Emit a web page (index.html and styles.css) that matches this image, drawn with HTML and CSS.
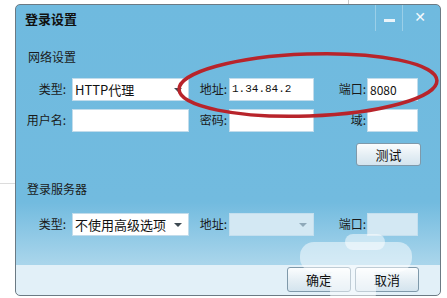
FILE: index.html
```html
<!DOCTYPE html>
<html lang="zh-CN">
<head>
    <meta charset="UTF-8">
    <title>登录设置</title>
    <link rel="stylesheet" href="styles.css">
</head>
<body>
    <div class="edge-v"></div>
    <div class="edge-h"></div>

    <div class="window">
        <div class="titlebar">
            <span class="title">登录设置</span>
            <div class="title-btns">
                <span class="tbtn tbtn-min"><i></i></span>
                <span class="tbtn tbtn-close">✕</span>
            </div>
        </div>

        <div class="section-label first">网络设置</div>
        <div class="form-grid">
            <label>类型:</label>
            <div class="combo"><span>HTTP代理</span><b class="arrow"></b></div>
            <label>地址:</label>
            <div class="field mono">1.34.84.2</div>
            <label>端口:</label>
            <div class="field">8080</div>

            <label>用户名:</label>
            <div class="field"></div>
            <label>密码:</label>
            <div class="field"></div>
            <label>域:</label>
            <div class="field"></div>
        </div>
        <div class="test-row">
            <button class="btn">测试</button>
        </div>

        <div class="section-label second">登录服务器</div>
        <div class="form-grid single">
            <label>类型:</label>
            <div class="combo"><span>不使用高级选项</span><b class="arrow"></b></div>
            <label>地址:</label>
            <div class="combo disabled"><span></span><b class="arrow"></b></div>
            <label>端口:</label>
            <div class="field disabled"></div>
        </div>

        <div class="footer">
            <button class="btn">确定</button>
            <button class="btn">取消</button>
        </div>
    </div>

    <div class="watermark">
        <span class="wm wm1"></span>
        <span class="wm wm2"></span>
        <span class="wm wm3"></span>
    </div>

    <svg class="circle-mark" width="447" height="298" viewBox="0 0 447 298">
        <ellipse cx="308" cy="85" rx="129" ry="31" transform="rotate(-2 308 85)"
                 fill="none" stroke="#b8242b" stroke-width="3.5"/>
    </svg>
</body>
</html>
```

FILE: styles.css
```css
body {
    margin: 0;
    width: 447px;
    height: 298px;
    background: #fff;
    position: relative;
    overflow: hidden;
    font-family: "Noto Sans CJK SC", "DejaVu Sans", sans-serif;
    font-size: 12px;
    color: #1a1a1a;
}
.edge-v {
    position: absolute;
    left: 348px;
    top: 0;
    width: 1px;
    height: 5px;
    background: #c8c8c8;
}
.edge-h {
    position: absolute;
    left: 0;
    top: 183px;
    width: 15px;
    height: 1px;
    background: #dcdcdc;
}
.window {
    position: absolute;
    left: 15px;
    top: 4px;
    width: 424px;
    height: 290px;
    border: 1px solid #6b7a84;
    border-radius: 5px;
    background: linear-gradient(#6fbadf 0%, #72bbdf 68%, #a9d5eb 89%, #a9d5eb 89.5%, #e2f0f8 89.6%, #e2f0f8 100%);
    display: flex;
    flex-direction: column;
    overflow: hidden;
}
.titlebar {
    height: 26px;
    display: flex;
    align-items: flex-start;
    justify-content: space-between;
}
.title {
    font-weight: bold;
    font-size: 13px;
    line-height: 16px;
    margin: 6px 0 0 9px;
    color: #111;
}
.title-btns {
    display: flex;
    height: 26px;
    margin-right: 3px;
}
.tbtn {
    width: 26px;
    height: 26px;
    border-left: 1px solid rgba(255, 255, 255, 0.3);
    display: flex;
    align-items: center;
    justify-content: center;
    color: #f4f9fc;
}
.tbtn-min i {
    display: block;
    width: 11px;
    height: 3px;
    margin-top: 4px;
    background: #eaf4fa;
}
.tbtn-close {
    width: 34px;
    font-size: 14px;
    font-weight: bold;
    margin-top: -4px;
    height: 30px;
}
.section-label {
    font-size: 12px;
    line-height: 16px;
    margin-left: 12px;
}
.section-label.first {
    margin-top: 18px;
}
.section-label.second {
    margin-top: 15px;
    margin-left: 11px;
}
.form-grid {
    display: grid;
    grid-template-columns: 52px 117px 40px 85px 53px 51px;
    grid-auto-rows: 23px;
    row-gap: 8px;
    margin: 13px 0 0 4px;
}
.form-grid.single {
    margin-top: 16px;
}
.form-grid label {
    text-align: right;
    padding-right: 6px;
    line-height: 22px;
}
.form-grid label:nth-child(3n+3) {
    padding-right: 2px;
}
.form-grid label:nth-child(6n+5) {
    padding-right: 1px;
}
.field, .combo {
    background: #fff;
    border: 1px solid #c2dceb;
    box-sizing: border-box;
    line-height: 21px;
    padding-left: 2px;
    font-size: 12px;
    color: #111;
}
.field.mono {
    font-family: "Liberation Mono", monospace;
    font-size: 11px;
}
.combo {
    display: flex;
    align-items: center;
    justify-content: space-between;
    padding-right: 6px;
    font-size: 13px;
}
.arrow {
    width: 0;
    height: 0;
    border-left: 4px solid transparent;
    border-right: 4px solid transparent;
    border-top: 4px solid #3e4a52;
}
.disabled {
    background: #d3e8f3;
    border-color: #c4dfee;
}
.combo.disabled .arrow {
    border-top-color: #8fa9b9;
}
.test-row {
    display: flex;
    justify-content: flex-end;
    margin-top: 11px;
    padding-right: 19px;
}
.btn {
    width: 65px;
    height: 23px;
    border: 1px solid #7f99aa;
    border-radius: 3px;
    background: linear-gradient(#fbfdfe, #e4eef4 55%, #d4e4ee);
    font-family: "Noto Sans CJK SC", sans-serif;
    font-size: 13px;
    color: #111;
    padding: 0;
}
.footer {
    margin-top: auto;
    height: 33px;
    display: flex;
    justify-content: flex-end;
    align-items: flex-start;
    gap: 4px;
    padding: 5px 21px 0 0;
    box-sizing: border-box;
}
.footer .btn {
    width: 64px;
    height: 25px;
}
.wm {
    position: absolute;
    background: rgba(255, 255, 255, 0.5);
    border-radius: 14px;
}
.wm1 {
    left: 300px;
    top: 242px;
    width: 112px;
    height: 30px;
}
.wm2 {
    left: 345px;
    top: 234px;
    width: 40px;
    height: 16px;
    border-radius: 8px;
}
.wm3 {
    left: 330px;
    top: 272px;
    width: 46px;
    height: 26px;
    border-radius: 4px;
}
.circle-mark {
    position: absolute;
    left: 0;
    top: 0;
    pointer-events: none;
}
```
